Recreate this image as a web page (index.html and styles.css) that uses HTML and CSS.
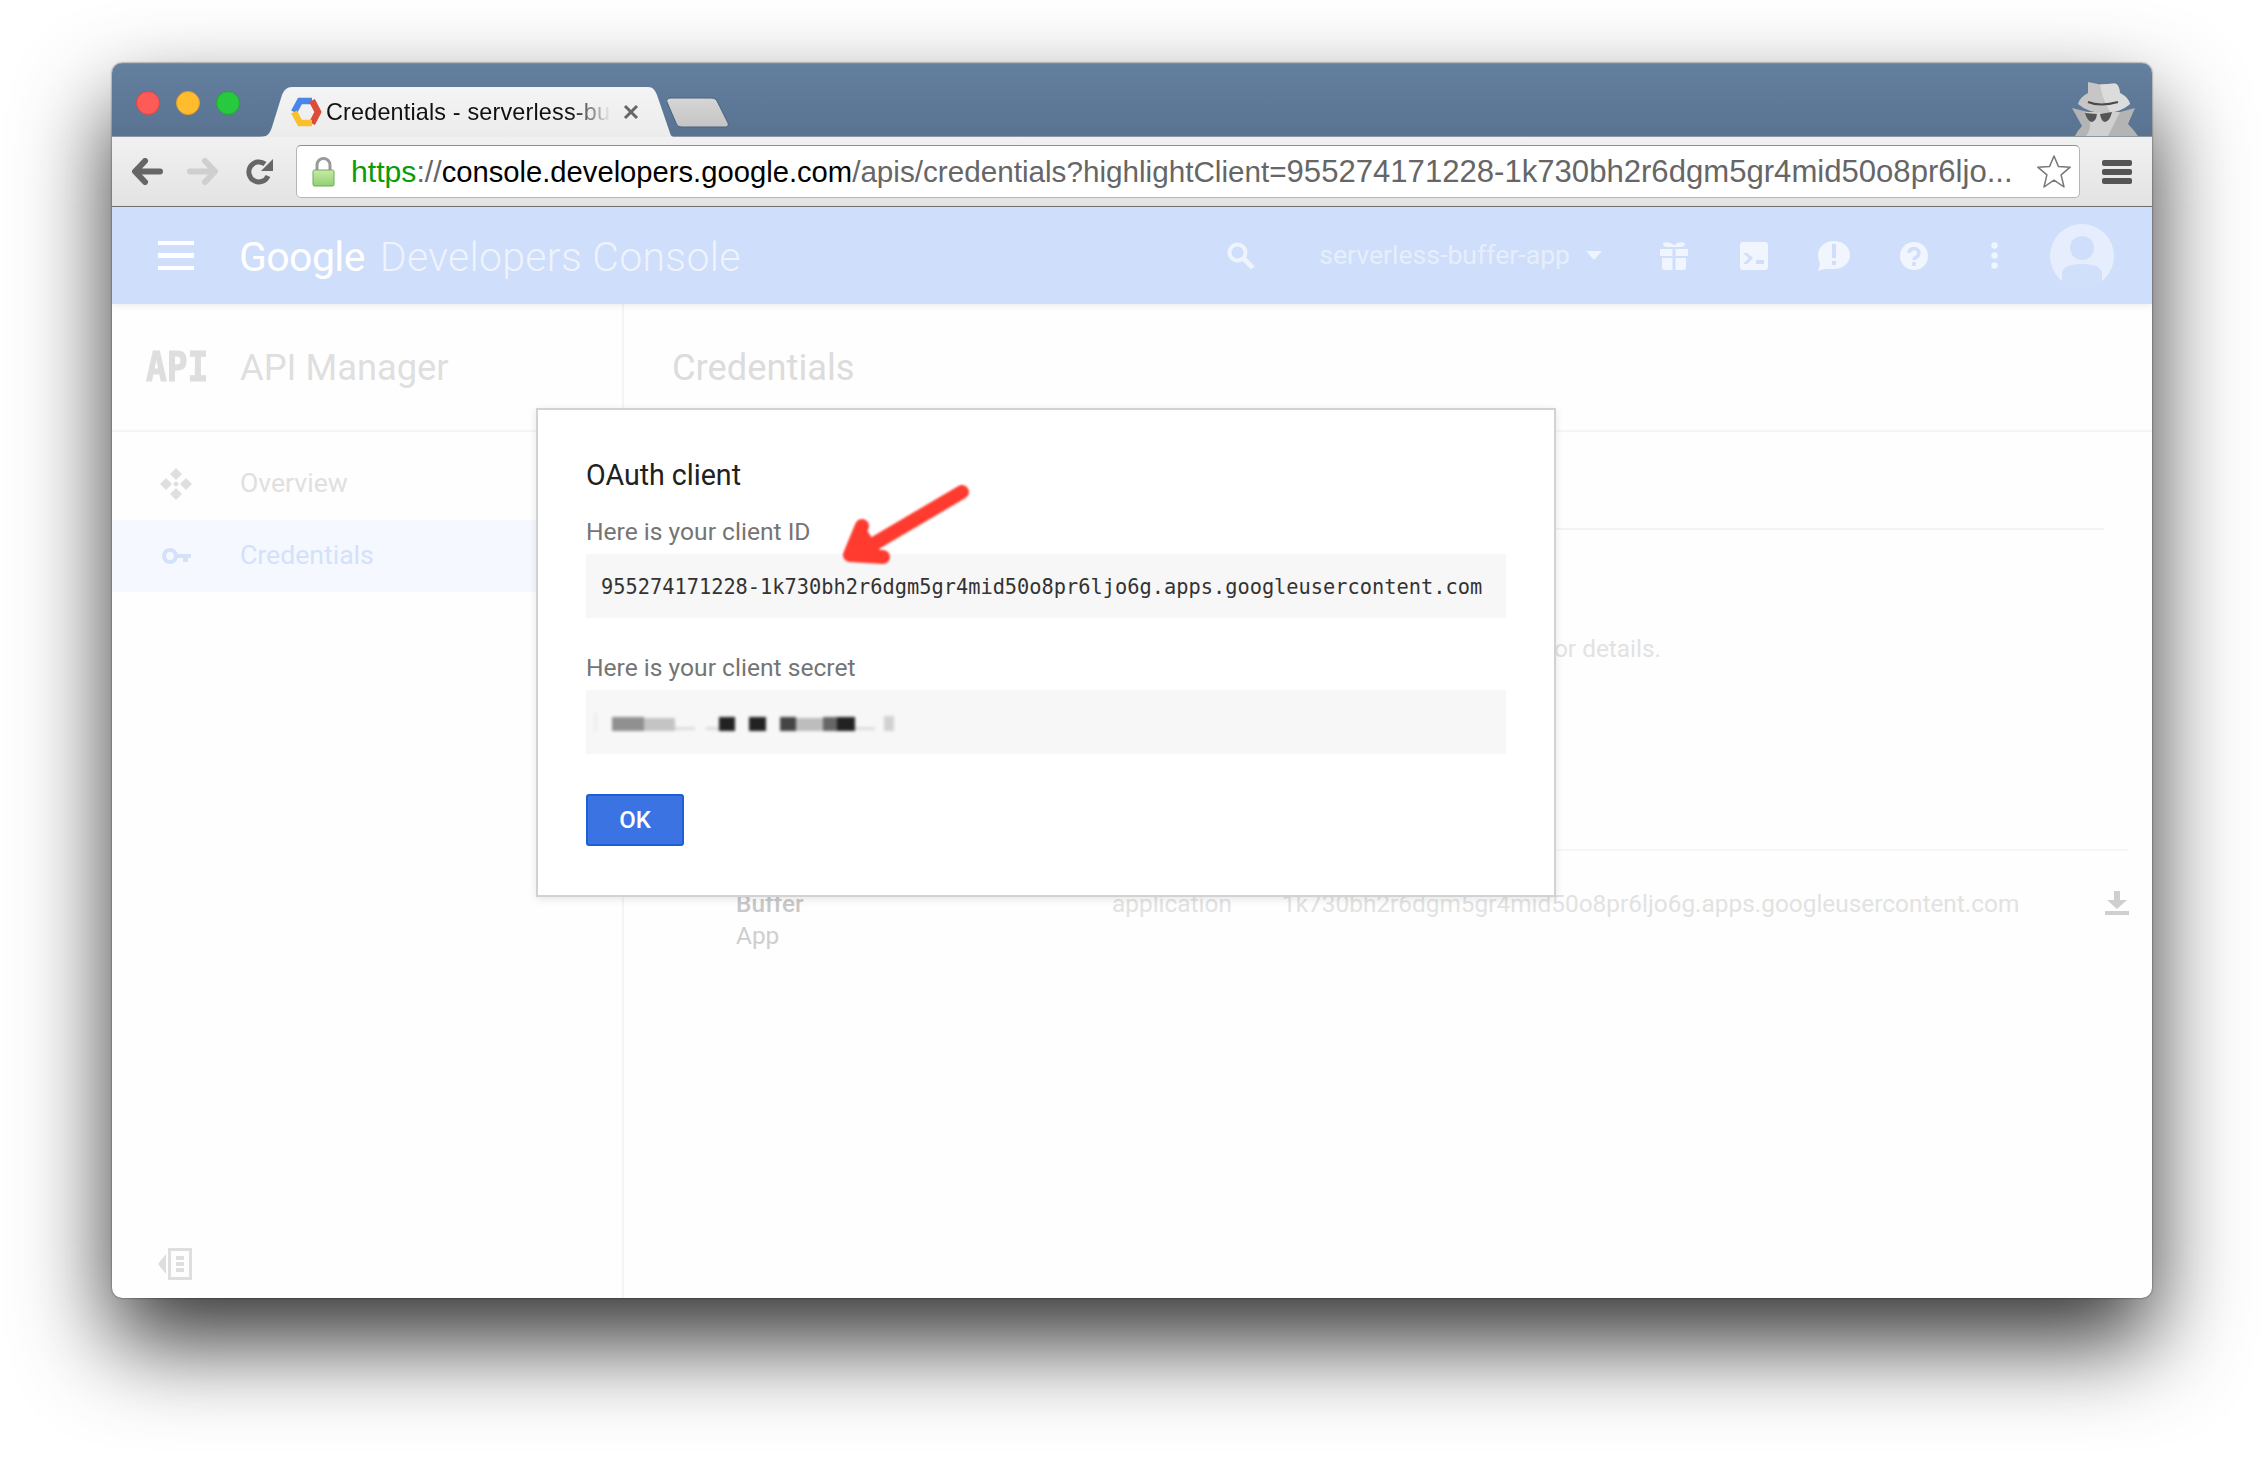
FILE: index.html
```html
<!DOCTYPE html>
<html lang="en">
<head>
<meta charset="utf-8">
<title>Credentials - serverless-buffer-app</title>
<link rel="stylesheet" href="styles.css">
</head>
<body>
<div class="window">
  <div class="titlebar">
    <div class="lights"><span class="light red"></span><span class="light yellow"></span><span class="light green"></span></div>
    <div class="tab">
      <svg class="favicon" width="32" height="30" viewBox="0 0 32 30" fill="none" stroke-width="6.5" stroke-linejoin="miter">
        <path d="M22 4H10L4 15" stroke="#4a86e8"/><path d="M22 3.5L28 15L22 26.5" stroke="#dd4b39"/><path d="M4 15L10 26H22" stroke="#fbc02d"/>
      </svg>
      <span class="tab-title">Credentials - serverless-bu</span>
      <svg class="tab-close" width="16" height="16" viewBox="0 0 16 16"><path d="M2 2L14 14M14 2L2 14" stroke="#666" stroke-width="3"/></svg>
    </div>
    <svg class="newtab" width="64" height="31" viewBox="0 0 64 31"><defs><linearGradient id="ntg" x1="0" y1="0" x2="0" y2="1"><stop offset="0" stop-color="#d6d6d6"/><stop offset="1" stop-color="#c4c4c4"/></linearGradient></defs><path d="M5 1H45C49 1 51 3 52 6L62 26C63 29 61 30 59 30H16C13 30 11 29 10 26L1 5C0 3 2 1 5 1Z" fill="url(#ntg)" stroke="#48607c"/></svg>
    <svg class="incognito" width="68" height="56" viewBox="0 0 68 56">
      <path d="M0 28L16 32H48L63 28L56 44Q62 50 66 56H3Q6 50 10 46Z" fill="#b4b4b4"/>
      <path d="M14 32H48Q42 44 36 56H14Q22 46 14 32Z" fill="#d0d0d0"/>
      <path d="M16 2L28 4.500L43 3.500Q47 4 48 13Q57 18 58 24Q48 33 33 33Q16 33 6 24Q8 17 16 13Z" fill="#c6c6c6"/>
      <path d="M28 4.500L43 3.500Q47 4 48 13Q57 18 58 24Q50 31 38 32Q30 18 28 4.500Z" fill="#dcdcdc"/>
      <path d="M16 22Q28 27 46 22" fill="none" stroke="#4a4a4a" stroke-width="2"/>
      <path d="M13 33L25 34Q24 42 19 42Q15 40 13 33ZM28 34L40 32Q38 41 33 42Q29 41 28 34Z" fill="#555"/>
    </svg>
  </div>

  <div class="toolbar">
    <svg class="tb-back" width="31" height="27" viewBox="0 0 31 27" fill="none" stroke="#666" stroke-width="6" stroke-linecap="round" stroke-linejoin="round"><path d="M13 3L3 13.5L13 24M4 13.5H28"/></svg>
    <svg class="tb-forward" width="31" height="27" viewBox="0 0 31 27" fill="none" stroke="#cfcfcf" stroke-width="6" stroke-linecap="round" stroke-linejoin="round"><path d="M18 3L28 13.5L18 24M27 13.5H3"/></svg>
    <svg class="tb-reload" width="27" height="27" viewBox="0 0 27 27" fill="none"><path d="M22 18A10 10 0 1 1 19 6" stroke="#666" stroke-width="5"/><path d="M27 1V13H15Z" fill="#666"/></svg>
    <div class="urlbar">
      <svg class="lock" width="23" height="30" viewBox="0 0 23 30">
        <defs><linearGradient id="lockg" x1="0" y1="0" x2="0" y2="1"><stop offset="0" stop-color="#c8eba6"/><stop offset="1" stop-color="#8fd072"/></linearGradient></defs>
        <path d="M5 14V8A6.5 6.5 0 0 1 18 8V14" fill="none" stroke="#9a9a9a" stroke-width="3"/>
        <rect x="1" y="13" width="21" height="16" rx="1.5" fill="url(#lockg)" stroke="#6fa85a"/>
      </svg>
      <div class="url"><span class="u-https">https</span><span class="u-scheme">://</span><span class="u-host">console.developers.google.com</span><span class="u-path">/apis/credentials?highlightClient=</span><span class="u-query">955274171228-1k730bh2r6dgm5gr4mid50o8pr6ljo...</span></div>
      <svg class="star" width="36" height="34" viewBox="0 0 36 34"><path d="M18 1L22.4 11.4L34.2 12.2L25.1 19.8L28 32L18 25.2L8 32L10.9 19.8L1.8 12.2L13.6 11.4Z" fill="#fff" stroke="#777" stroke-width="1.5" stroke-linejoin="round"/></svg>
    </div>
    <div class="tb-menu"><span></span><span></span><span></span></div>
  </div>

  <header class="appbar">
    <div class="hamburger"><span></span><span></span><span></span></div>
    <div class="logo"><span class="logo-g">Google</span><span class="logo-d">Developers Console</span></div>
    <div class="appbar-right">
      <svg class="h-search" width="28" height="27" viewBox="0 0 28 27" fill="none" stroke="#eef3fe" stroke-width="4"><circle cx="10.5" cy="10.5" r="8"/><path d="M16 16L26 26" stroke-width="5"/></svg>
      <span class="project">serverless-buffer-app</span>
      <svg class="h-caret" width="16" height="9" viewBox="0 0 16 9"><path d="M0 0H16L8 9Z" fill="#eef3fe"/></svg>
      <div class="hicons">
        <div class="hicon"><svg width="28" height="28" viewBox="0 0 28 28" fill="#f0f5fe"><path d="M0 7H12.500V14H1Q0 14 0 13ZM15.500 7H28V13Q28 14 27 14H15.500ZM2 16H12.500V28H4Q2 28 2 26ZM15.500 16H26V26Q26 28 24 28H15.500ZM3 1Q9 -1 14 3Q19 -1 25 1Q25 5 21 5H7Q3 5 3 1Z"/></svg></div>
        <div class="hicon"><svg width="28" height="28" viewBox="0 0 28 28"><rect width="28" height="28" rx="3" fill="#f0f5fe"/><path d="M3 11H7L13 16L7 22H3L9 16Z" fill="#cfdefa"/><path d="M16 18H24V22H16Z" fill="#cfdefa"/></svg></div>
        <div class="hicon"><svg width="32" height="30" viewBox="0 0 32 30"><path d="M16 0C25 0 32 6 32 14C32 22 25 28 16 28H7L0 30L2 23C1 20 0 17 0 14C0 6 7 0 16 0Z" fill="#f0f5fe"/><path d="M16 3V17M16 20V24" stroke="#cfdefa" stroke-width="4"/></svg></div>
        <div class="hicon"><svg width="28" height="28" viewBox="0 0 28 28"><circle cx="14" cy="14" r="14" fill="#f0f5fe"/><path d="M9 11A5 4.500 0 1 1 16.500 15Q14 16 14 18" fill="none" stroke="#cfdefa" stroke-width="3.500"/><path d="M14 20V24" stroke="#cfdefa" stroke-width="3.500"/></svg></div>
        <div class="hicon"><svg width="7" height="27" viewBox="0 0 7 27" fill="#f0f5fe"><circle cx="3.500" cy="3.500" r="3.200"/><circle cx="3.500" cy="13.500" r="3.200"/><circle cx="3.500" cy="23.500" r="3.200"/></svg></div>
      </div>
      <svg class="avatar" width="64" height="64" viewBox="0 0 64 64"><circle cx="32" cy="32" r="32" fill="#e6eefd"/><circle cx="32" cy="24" r="12" fill="#cfdefa"/><path d="M12 52V50Q12 40 32 40Q52 40 52 50V60Q42 64 32 64Q22 64 12 60Z" fill="#d0dffa"/></svg>
    </div>
  </header>

  <div class="content">
    <aside class="sidebar">
      <div class="side-head"><span class="api-badge">API</span><span class="side-title">API Manager</span></div>
      <nav class="nav">
        <div class="nav-item">
          <svg class="nav-icon" width="32" height="32" viewBox="0 0 32 32" fill="#dfdfdf"><path d="M16 0L22 6L16 12L10 6ZM6 10L12 16L6 22L0 16ZM26 10L32 16L26 22L20 16ZM16 20L22 26L16 32L10 26Z"/><path d="M16 13L19 16L16 19L13 16Z"/></svg>
          <span>Overview</span>
        </div>
        <div class="nav-item active">
          <svg class="nav-icon" width="30" height="16" viewBox="0 0 30 16"><circle cx="8" cy="8" r="6" fill="none" stroke="#d3e1fb" stroke-width="4"/><path d="M13 6H29V10H26V14H21V10H13Z" fill="#d3e1fb"/></svg>
          <span>Credentials</span>
        </div>
      </nav>
      <svg class="collapse" width="34" height="32" viewBox="0 0 34 32" fill="#dedede"><path d="M8 6V26L0 16Z"/><path d="M10 0H34V32H10ZM13 3V29H31V3Z" fill-rule="evenodd"/><path d="M18 8H26V12H18ZM18 14H26V18H18ZM18 20H26V24H18Z"/></svg>
    </aside>
    <main class="main">
      <div class="main-head">Credentials</div>
      <div class="tabs-line"></div>
      <p class="intro">Refer to the API documentation for details.</p>
      <div class="table-row">
        <div class="cell-name"><b>Buffer</b><br>App</div>
        <div class="cell-type">application</div>
        <div class="cell-id">1k730bh2r6dgm5gr4mid50o8pr6ljo6g.apps.googleusercontent.com</div>
        <svg class="dl" width="24" height="24" viewBox="0 0 24 24" fill="#cfcfcf"><path d="M9 0H15V9H22L12 18L2 9H9ZM0 20H24V24H0Z"/></svg>
      </div>
    </main>
  </div>

  <div class="dialog">
    <h2 class="dlg-title">OAuth client</h2>
    <div class="dlg-label first">Here is your client ID</div>
    <div class="dlg-box code">955274171228-1k730bh2r6dgm5gr4mid50o8pr6ljo6g.apps.googleusercontent.com</div>
    <div class="dlg-label">Here is your client secret</div>
    <div class="dlg-box">
      <svg class="secret" width="304" height="24" viewBox="0 0 304 24">
        <rect x="0" y="2" width="3" height="18" fill="#ececec"/>
        <rect x="18" y="6" width="32" height="14" fill="#909090"/><rect x="50" y="7" width="31" height="13" fill="#c4c4c4"/>
        <rect x="81" y="16" width="20" height="3" fill="#dcdcdc"/><rect x="112" y="16" width="13" height="3" fill="#dcdcdc"/>
        <rect x="125" y="6" width="16" height="14" fill="#222"/><rect x="155" y="6" width="17" height="14" fill="#222"/>
        <rect x="186" y="6" width="16" height="14" fill="#444"/><rect x="202" y="7" width="27" height="13" fill="#bdbdbd"/>
        <rect x="229" y="6" width="14" height="14" fill="#666"/><rect x="243" y="6" width="18" height="14" fill="#222"/>
        <rect x="261" y="16" width="20" height="3" fill="#dcdcdc"/><rect x="290" y="5" width="10" height="15" fill="#d2d2d2"/>
      </svg>
    </div>
    <button class="ok">OK</button>
  </div>

  <svg class="arrow" width="140" height="96" viewBox="0 0 140 96" fill="none" stroke="#ff3b30" stroke-linecap="round" stroke-linejoin="round">
    <path d="M126 16L24 76" stroke-width="14"/>
    <path d="M26 50L14 79L47 81" stroke-width="14"/>
    <path d="M14 79L30 58L42 78Z" fill="#ff3b30" stroke-width="6"/>
  </svg>
</div>
</body>
</html>
```

FILE: styles.css
```css
* { box-sizing: border-box; }
html, body { margin: 0; padding: 0; background: #fff; }
body { width: 2265px; height: 1458px; overflow: hidden; font-family: Roboto, "Liberation Sans", sans-serif; padding: 63px 0 0 112px; }

.window {
  position: relative;
  width: 2040px;
  height: 1235px;
  display: flex;
  flex-direction: column;
  border-radius: 10px;
  background: #fefefe;
  box-shadow: 0 44px 92px rgba(0,0,0,.8), 0 0 2px rgba(0,0,0,.7);
  overflow: hidden;
}

/* title bar */
.titlebar {
  height: 74px;
  flex: none;
  display: flex;
  background: linear-gradient(#64809f, #597391);
  border-top: 1px solid #7c8a99;
  border-bottom: 1px solid #8d98a5;
}
.lights { display: flex; gap: 16px; padding: 27px 0 0 24px; }
.light { width: 24px; height: 24px; border-radius: 50%; border: 1px solid; }
.red { background: #fc5b57; border-color: #e0443e; }
.yellow { background: #ffbd2e; border-color: #e0a028; }
.green { background: #27c93f; border-color: #1fa82f; }
.tab {
  width: 414px;
  height: 50px;
  margin: 23px 0 0 20px;
  flex: none;
  display: flex;
  align-items: center;
  background: linear-gradient(#f4f4f4, #ececec);
  clip-path: path("M0 50C8 50 10 46 12 40L22 8C24 3 27 0 32 0L388 0C393 0 395 3 397 8L410 46C411 49 412 50 414 50Z");
}
.favicon { margin-left: 30px; flex: none; }
.tab-title {
  width: 285px;
  margin-left: 4px;
  flex: none;
  white-space: nowrap;
  font: 23.4px "Liberation Sans", sans-serif;
  letter-spacing: .17px;
  color: #111;
  -webkit-mask-image: linear-gradient(to right, #000 86%, transparent 100%);
  mask-image: linear-gradient(to right, #000 86%, transparent 100%);
}
.tab-close { margin-left: 12px; flex: none; }
.newtab { margin: 33px 0 0 -8px; flex: none; }
.incognito { margin: 16px 12px 0 auto; flex: none; }

/* toolbar */
.toolbar {
  height: 70px;
  flex: none;
  display: flex;
  align-items: center;
  padding: 0 20px;
  background: linear-gradient(#f1f1f1, #e3e3e3);
  border-bottom: 1px solid #6f6f6f;
}
.tb-forward { margin-left: 24px; }
.tb-reload { margin-left: 28px; }
.urlbar {
  flex: 1;
  height: 53px;
  margin-left: 23px;
  display: flex;
  align-items: center;
  background: #fff;
  border: 1px solid #b5b5b5;
  border-top-color: #8f8f8f;
  border-radius: 5px;
  padding: 0 7px 0 15px;
}
.lock { flex: none; }
.url {
  flex: 1;
  margin: 1px 0 0 16px;
  white-space: nowrap;
  font: 30.2px "Liberation Sans", sans-serif;
  color: #666;
}
.u-https { color: #0a9c0a; }
.u-host { color: #000; font-size: 29.2px; }
.u-path { font-size: 29.66px; }
.u-query { font-size: 31.1px; }
.star { flex: none; }
.tb-menu { width: 30px; margin-left: 22px; display: flex; flex-direction: column; gap: 3px; }
.tb-menu span { height: 6px; border-radius: 2px; background: #555; }

/* app bar */
.appbar {
  height: 97px;
  flex: none;
  display: flex;
  align-items: center;
  background: #cfdefa;
  box-shadow: 0 2px 6px rgba(0,0,0,.07);
  position: relative;
  z-index: 1;
}
.hamburger { width: 36px; margin-left: 46px; display: flex; flex-direction: column; gap: 8px; }
.hamburger span { height: 4.500px; background: #fff; }
.logo { margin: 2px 0 0 45px; display: flex; align-items: baseline; gap: 15px; font-size: 41px; }
.logo-g { color: #fff; letter-spacing: -.6px; }
.logo-d { color: #eef3fd; font-weight: 300; letter-spacing: .3px; }
.appbar-right { margin-left: auto; padding-right: 38px; display: flex; align-items: center; }
.project { margin: -2px 0 0 64px; font-size: 26.6px; color: #e6eefc; white-space: nowrap; }
.h-caret { margin-left: 16px; }
.hicons { display: flex; margin-left: 32px; }
.hicon { width: 80px; display: flex; justify-content: center; align-items: center; }
.avatar { margin-left: 16px; }

/* content */
.content { flex: 1; display: flex; min-height: 0; }
.sidebar { width: 512px; flex: none; display: flex; flex-direction: column; border-right: 2px solid #f4f4f4; }
.side-head { height: 128px; flex: none; display: flex; align-items: center; border-bottom: 2px solid #f5f5f5; }
.api-badge {
  width: 62px;
  margin-left: 34px;
  font: bold 34.5px "DejaVu Sans Mono", monospace;
  -webkit-text-stroke: 1px #dedede;
  color: #dedede;
  transform: scaleY(1.2);
}
.side-title { margin-left: 32px; font-size: 36.3px; color: #dfdfdf; }
.nav { padding-top: 16px; }
.nav-item { height: 72px; display: flex; align-items: center; font-size: 26.6px; color: #e0e0e0; position: relative; }
.nav-item span { position: absolute; left: 128px; padding-bottom: 3px; }
.nav-icon { margin-left: 48px; }
.nav-item.active { background: #f5f8fe; color: #d3e1fb; }
.nav-item.active .nav-icon { margin-left: 50px; }
.collapse { margin: auto 0 18px 46px; flex: none; }

.main { flex: 1; min-width: 0; }
.main-head { height: 128px; display: flex; align-items: center; padding-left: 48px; font-size: 36.3px; color: #dcdcdc; border-bottom: 2px solid #f5f5f5; }
.tabs-line { height: 98px; margin: 0 48px; border-bottom: 2px solid #f3f3f3; }
.intro { width: 1037px; margin: 103px 0 0; text-align: right; font-size: 24.4px; line-height: 32px; color: #e2e2e2; white-space: nowrap; }
.table-row {
  display: grid;
  grid-template-columns: 376px 172px 821px 24px;
  margin: 184px 24px 0 48px;
  padding: 37px 0 0 64px;
  border-top: 2px solid #f6f6f6;
  font-size: 24.4px;
  line-height: 32px;
  color: #e2e2e2;
}
.cell-name { color: #cecece; }
.cell-name b { font-weight: 500; color: #c8c8c8; }
.cell-id { margin-left: -2px; }
.dl { margin-top: 3px; }

/* dialog */
.dialog {
  position: absolute;
  left: 424px;
  top: 345px;
  width: 1020px;
  height: 489px;
  padding: 0 48px;
  background: #fff;
  border: 2px solid #d2d2d2;
  box-shadow: 0 2px 8px rgba(0,0,0,.1);
}
.dlg-title { margin: 47px 0 0; font-size: 28.6px; line-height: 36px; font-weight: 400; color: #212121; }
.dlg-label { margin-top: 34px; font-size: 24.6px; line-height: 32px; color: #757575; }
.dlg-label.first { margin-top: 23px; }
.dlg-box {
  height: 64px;
  margin-top: 6px;
  display: flex;
  align-items: center;
  background: #f7f7f7;
}
.code { padding: 2px 0 0 15px; font: 20.33px "DejaVu Sans Mono", monospace; color: #333; white-space: nowrap; }
.secret { margin: 2px 0 0 8px; filter: blur(1.6px); }
.ok {
  display: block;
  width: 98px;
  height: 52px;
  margin-top: 40px;
  padding: 0;
  background: #3b73e3;
  border: 2px solid #1f5fd6;
  border-radius: 3px;
  font: 500 24px Roboto, sans-serif;
  color: #fff;
}
.arrow { position: absolute; left: 724px; top: 413px; filter: blur(.8px); }
```
